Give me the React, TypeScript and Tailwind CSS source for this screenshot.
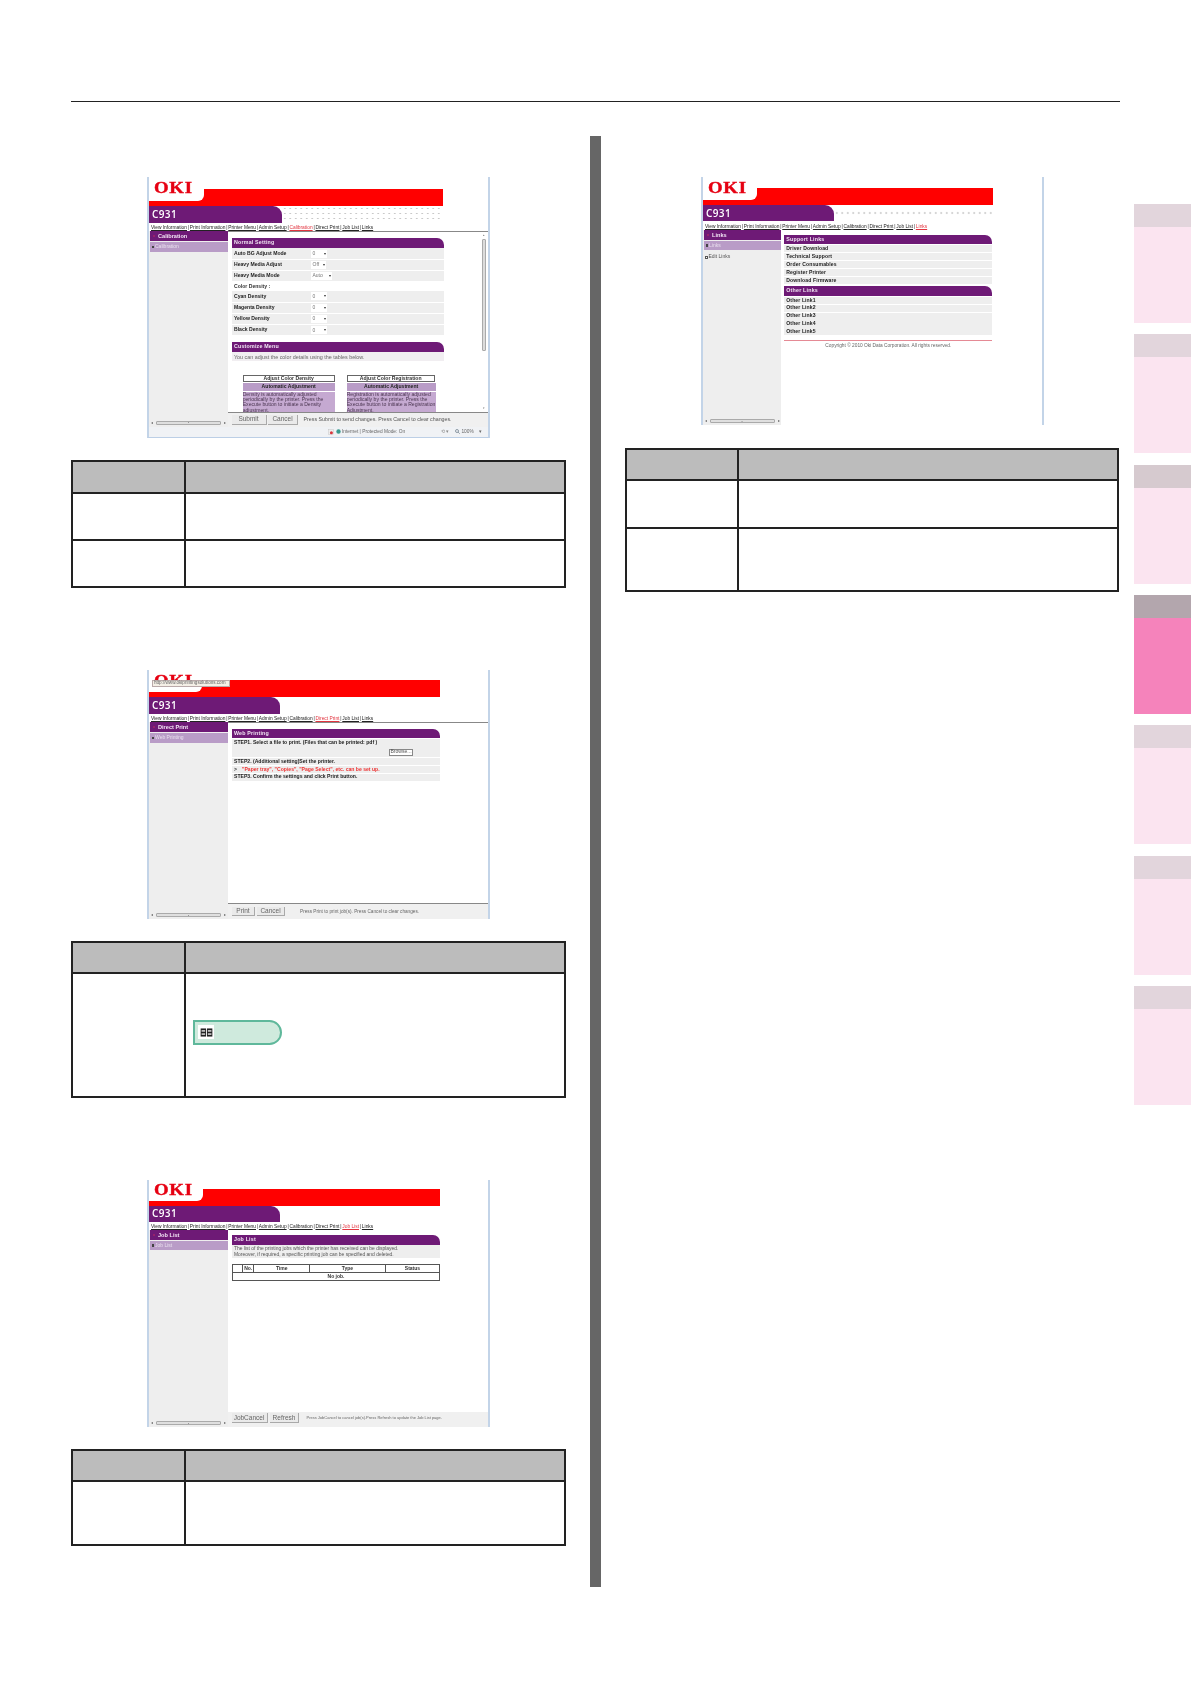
import React from 'react';

const sans = "font-['Liberation_Sans',Arial,sans-serif]";
const navItems = ['View Information', 'Print Information', 'Printer Menu', 'Admin Setup', 'Calibration', 'Direct Print', 'Job List', 'Links'];

function Header({ redTop, height, notch, redWidth, tabWidth, tabHeight, navHeight, active, dots, tooltip, logoTop = 'pt-[4px]' }: {
    redTop: string; height: string; notch: string; redWidth: string; tabWidth: string; tabHeight: string; navHeight: string;
    active: string; dots?: string; tooltip?: boolean; logoTop?: string;
}) {
    return (
        <div className="relative shrink-0">
            <div className={`flex flex-col ${redWidth}`}>
                <div className={`flex ${height} ${redTop}`}>
                    <div className={`${notch} h-[82%] bg-white rounded-br-[6px] ${logoTop} pl-[5px]`}>
                        <div className="origin-left scale-x-[1.14] font-['Liberation_Serif',serif] text-[16.5px] leading-[14px] font-bold tracking-[0.6px] text-[#e60012] [-webkit-text-stroke:0.4px_#e60012]">OKI</div>
                    </div>
                </div>
                <div className="flex">
                    <div className={`${tabWidth} ${tabHeight} bg-[#6e1a76] rounded-tr-[9px] flex items-center pl-[3px] font-['Open_Sans',sans-serif] text-[10px] font-semibold text-white tracking-[0.4px]`}>C931</div>
                    {dots && <div className={`flex-1 ${dots}`} />}
                </div>
            </div>
            <div className={`${navHeight} flex items-end pl-[2px] ${sans} text-[4.85px] leading-[6px] font-medium text-[#222] whitespace-nowrap`}>
                {navItems.map((item, i) => (
                    <span key={item}>
                        {i > 0 && <span className="px-[0.8px]">|</span>}
                        <span className={`underline ${item === active ? 'text-[#e2343f]' : ''}`}>{item}</span>
                    </span>
                ))}
            </div>
            {tooltip && (
                <div className={`absolute left-[3px] top-[10px] w-[78px] h-[7px] bg-[#f4efe6] border border-[#b9a9a9] flex items-center pl-[1px] ${sans} text-[4.6px] text-[#666] whitespace-nowrap`}>
                    http://www.okiprintingsolutions.com
                </div>
            )}
        </div>
    );
}

function Sidebar({ title, item, extra, width, headH, subH }: { title: string; item: string; extra?: string; width: string; headH: string; subH: string }) {
    return (
        <div className={`${width} shrink-0 bg-[#eeeeee] flex flex-col ${sans}`}>
            <div className={`${headH} bg-[#6e1a76] ml-[1px] flex items-center pl-[3px] gap-[3px] text-[5.6px] font-bold text-[#f3e6f5]`}>
                <span className="w-[2px] h-[2px] rounded-full bg-[#a4246a]" />
                {title}
            </div>
            <div className={`${subH} bg-[#b99cc7] ml-[1px] mt-[1px] flex items-center pl-[1.5px] gap-[1px] text-[5px] text-[#e9dfee]`}>
                <span className="w-[2.5px] h-[2.5px] bg-white border-[0.5px] border-[#444]" />
                {item}
            </div>
            {extra && (
                <div className="mt-[3px] ml-[2px] flex items-center gap-[0.5px] text-[5px] text-[#555]">
                    <span className="w-[3px] h-[3px] bg-white border-[0.5px] border-[#555]" />
                    {extra}
                </div>
            )}
            <div className="mt-auto mb-[1px] flex items-center justify-center gap-[3px] h-[6px] text-[4px] text-[#666]">
                <span>◂</span>
                <div className="w-[65px] h-[4px] rounded-[1px] border-[0.5px] border-[#aaa] bg-[#dfdfdf] flex items-center justify-center text-[3px]">▪</div>
                <span>▸</span>
            </div>
        </div>
    );
}

function Section({ title, h = 'h-[10px]' }: { title: string; h?: string }) {
    return <div className={`${h} bg-[#6e1a76] rounded-tr-[7px] flex items-center pl-[2px] ${sans} text-[5.3px] font-bold text-[#f1e6f3] tracking-[0.2px]`}>{title}</div>;
}

function Select({ value, w = 'w-[16px]' }: { value: string; w?: string }) {
    return (
        <div className={`${w} h-[8px] bg-white flex items-center justify-between px-[1.5px] text-[5px] font-normal text-[#777]`}>
            <span>{value}</span>
            <span className="text-[4px] text-[#333]">▾</span>
        </div>
    );
}

function Setting({ label, value, w }: { label: string; value: string; w?: string }) {
    return (
        <div className="h-[10.3px] mb-[1px] bg-[#eeeeee] flex items-center pl-[2px] font-bold text-[#222]">
            <span className="w-[77px]">{label}</span>
            <Select value={value} w={w} />
        </div>
    );
}

function Button({ label, w, h = 'h-[10px]', size = 'text-[6.5px]' }: { label: string; w: string; h?: string; size?: string }) {
    return <div className={`${w} ${h} ${size} shrink-0 bg-[#eaeaea] border-r border-b border-[#a9a9a9] flex items-center justify-center text-[#666]`}>{label}</div>;
}

function Frame({ height, children, border = '' }: { height: string; children: React.ReactNode; border?: string }) {
    return (
        <div className={`ml-[76px] w-[343px] ${height} bg-white border-l-2 border-r-2 border-[#c3d4e8] flex flex-col overflow-hidden blur-[0.5px] ${border}`}>
            {children}
        </div>
    );
}

function CalibrationShot() {
    const adjust = (head: string, body: string, boxW: string, w: string) => (
        <div className={`${w} flex flex-col text-center`}>
            <div className={`${boxW} h-[6.8px] border-[0.7px] border-[#666] bg-white flex items-center justify-center leading-none font-bold text-[#333]`}>{head}</div>
            <div className="mt-[1.5px] h-[8px] bg-[#b99cc7] flex items-center justify-center font-bold text-[#222]">Automatic Adjustment</div>
            <div className="mt-[0.5px] bg-[#c5a9d1] text-left leading-[5.3px] text-[#4a3550] h-[30px] text-[5.1px]">{body}</div>
        </div>
    );
    return (
        <Frame height="h-[260.5px]" border="border-b border-b-[#bccfe6]">
            <Header redTop="bg-[linear-gradient(to_bottom,#fff_12px,#f00_12px)]" height="h-[29px]" notch="w-[55px]" redWidth="w-[294px]" tabWidth="w-[133px]" tabHeight="h-[16.5px]" navHeight="h-[8.5px]" active="Calibration"
                dots="bg-[radial-gradient(#c9c9c9_0.5px,transparent_0.7px)] bg-[length:5.5px_5px]" />
            <div className="flex flex-1 min-h-0">
                <Sidebar title="Calibration" item="Calibration" width="w-[79px]" headH="h-[10px]" subH="h-[10px]" />
                <div className="flex-1 flex flex-col min-w-0 border-t border-[#888]">
                    <div className="flex-1 min-h-0 flex overflow-hidden">
                        <div className={`w-[212px] ml-[4px] pt-[5.7px] ${sans} text-[5.1px] overflow-hidden`}>
                            <Section title="Normal Setting" />
                            <div className="mt-[0.7px]">
                                <Setting label="Auto BG Adjust Mode" value="0" />
                                <Setting label="Heavy Media Adjust" value="Off" w="w-[15px]" />
                                <Setting label="Heavy Media Mode" value="Auto" w="w-[21px]" />
                                <div className="h-[8.5px] mb-[0.5px] flex items-center pl-[2px] font-bold text-[#333]">Color Density :</div>
                                <Setting label="Cyan Density" value="0" />
                                <Setting label="Magenta Density" value="0" />
                                <Setting label="Yellow Density" value="0" />
                                <Setting label="Black Density" value="0" />
                            </div>
                            <div className="mt-[7px]"><Section title="Customize Menu" /></div>
                            <div className="h-[8.5px] bg-[#f1eef1] flex items-center pl-[2px] text-[#666] text-[5.4px]">You can adjust the color details using the tables below.</div>
                            <div className="mt-[14px] ml-[10.7px] flex gap-[12px]">
                                {adjust('Adjust Color Density', 'Density is automatically adjusted periodically by the printer. Press the Execute button to initiate a Density adjustment.', 'w-[92px]', 'w-[92px]')}
                                {adjust('Adjust Color Registration', 'Registration is automatically adjusted periodically by the printer. Press the Execute button to initiate a Registration Adjustment.', 'w-[88px]', 'w-[89px]')}
                            </div>
                        </div>
                        <div className="ml-auto mr-[1.5px] w-[5px] flex flex-col items-center text-[3px] text-[#777]">
                            <span className="h-[7px] leading-[7px]">▴</span>
                            <div className="w-[4.5px] h-[112px] rounded-[1px] bg-[#dcdcdc] border-[0.5px] border-[#aaa]" />
                            <span className="mt-auto h-[6px]">▾</span>
                        </div>
                    </div>
                    <div className={`h-[15px] shrink-0 border-t border-[#888] bg-[#f0f0f0] flex items-center pl-[3.5px] gap-[1.5px] ${sans}`}>
                        <Button label="Submit" w="w-[35px]" />
                        <Button label="Cancel" w="w-[30px]" />
                        <span className="ml-[4px] text-[5.3px] text-[#555] whitespace-nowrap">Press Submit to send changes. Press Cancel to clear changes.</span>
                    </div>
                </div>
            </div>
            <div className={`h-[10px] shrink-0 bg-[#f0f2f5] flex items-center pl-[179px] ${sans} text-[4.8px] text-[#666]`}>
                <svg viewBox="0 0 8 8" className="w-[6px] h-[6px]"><rect x="0.5" y="0.5" width="7" height="7" fill="#eee" stroke="#bbb" strokeWidth="0.5" /><circle cx="4.5" cy="5" r="2" fill="#d9363e" /></svg>
                <svg viewBox="0 0 8 8" className="w-[5px] h-[5px] ml-[2px]"><circle cx="4" cy="4" r="3.5" fill="#3a9a8f" /></svg>
                <span className="ml-[1px]">Internet | Protected Mode: On</span>
                <span className="ml-[36px] text-[#888]">⟲ ▾</span>
                <svg viewBox="0 0 8 8" className="w-[5px] h-[5px] ml-[6px] mr-[1px]"><circle cx="3.2" cy="3.2" r="2.4" fill="none" stroke="#567" strokeWidth="1" /><path d="M5 5 L7.5 7.5" stroke="#567" strokeWidth="1" /></svg>
                <span>100%</span>
                <span className="ml-[5px]">▾</span>
            </div>
        </Frame>
    );
}

function Step({ children, h = 'h-[7.2px]', cls = 'font-bold text-[#222]' }: { children: React.ReactNode; h?: string; cls?: string }) {
    return <div className={`${h} mb-[0.8px] bg-[#eeeeee] flex items-center pl-[2px] ${cls}`}>{children}</div>;
}

function DirectPrintShot() {
    return (
        <Frame height="h-[249px]">
            <Header redTop="bg-[linear-gradient(to_bottom,#fff_10.3px,#f00_10.3px)]" height="h-[27.3px]" notch="w-[53px]" redWidth="w-[291px]" tabWidth="w-[131px]" tabHeight="h-[16.7px]" navHeight="h-[8.3px]" active="Direct Print" tooltip />
            <div className="flex flex-1 min-h-0">
                <Sidebar title="Direct Print" item="Web Printing" width="w-[79px]" headH="h-[9.7px]" subH="h-[9.7px]" />
                <div className="flex-1 flex flex-col min-w-0 border-t border-[#888]">
                    <div className={`flex-1 min-h-0 pl-[4px] pt-[5.7px] ${sans} text-[5.1px]`}>
                        <div className="w-[208px]">
                            <Section title="Web Printing" h="h-[9.5px]" />
                            <div className="mt-[1px]">
                                <Step>STEP1. Select a file to print. (Files that can be printed: pdf )</Step>
                                <Step h="h-[9.5px]"><span className="ml-[155px] w-[24px] h-[7px] bg-white border-[0.5px] border-[#888] flex items-center justify-center font-normal text-[#555]">Browse...</span></Step>
                                <Step>STEP2. (Additional setting)Set the printer.</Step>
                                <Step cls="font-bold text-[#e33]"><span className="text-[#333] mr-[5px]">&gt;</span>"Paper tray", "Copies", "Page Select", etc. can be set up.</Step>
                                <Step>STEP3. Confirm the settings and click Print button.</Step>
                            </div>
                        </div>
                    </div>
                    <div className={`h-[15.7px] shrink-0 border-t border-[#888] bg-[#f0f0f0] flex items-center pl-[4px] gap-[2px] ${sans}`}>
                        <Button label="Print" w="w-[23px]" h="h-[9px]" />
                        <Button label="Cancel" w="w-[28px]" h="h-[9px]" />
                        <span className="ml-[13px] text-[4.7px] text-[#666] whitespace-nowrap">Press Print to print job(s). Press Cancel to clear changes.</span>
                    </div>
                </div>
            </div>
        </Frame>
    );
}

function JobListShot() {
    const cols = ['w-[10px]', 'w-[11.4px]', 'w-[55.6px]', 'w-[76px]', 'flex-1'];
    const heads = ['', 'No.', 'Time', 'Type', 'Status'];
    return (
        <Frame height="h-[247px]">
            <Header redTop="bg-[linear-gradient(to_bottom,#fff_9px,#f00_9px)]" height="h-[26px]" notch="w-[54px]" redWidth="w-[291px]" tabWidth="w-[131px]" tabHeight="h-[16px]" navHeight="h-[8px]" active="Job List" logoTop="pt-[3px]" />
            <div className="flex flex-1 min-h-0">
                <Sidebar title="Job List" item="Job List" width="w-[79px]" headH="h-[10px]" subH="h-[9.5px]" />
                <div className="flex-1 flex flex-col min-w-0">
                    <div className={`flex-1 min-h-0 pl-[4px] pt-[5.3px] ${sans}`}>
                        <div className="w-[208px]">
                            <Section title="Job List" />
                            <div className="h-[13px] bg-[#eeeeee] pl-[2px] flex flex-col justify-center text-[4.95px] leading-[5.4px] text-[#555] whitespace-nowrap">
                                <span>The list of the printing jobs which the printer has received can be displayed.</span>
                                <span>Moreover, if required, a specific printing job can be specified and deleted.</span>
                            </div>
                            <div className="mt-[6px] border-[0.7px] border-[#555] text-[5px] font-bold text-[#333]">
                                <div className="h-[7.5px] flex border-b-[0.7px] border-[#555]">
                                    {heads.map((head, i) => (
                                        <div key={i} className={`${cols[i]} ${i < 4 ? 'border-r-[0.7px] border-[#555]' : ''} flex items-center justify-center`}>{head}</div>
                                    ))}
                                </div>
                                <div className="h-[7.5px] flex items-center justify-center">No job.</div>
                            </div>
                        </div>
                    </div>
                    <div className={`h-[15px] shrink-0 bg-[#f0f0f0] flex items-start pt-[1px] pl-[3.5px] gap-[2.5px] ${sans}`}>
                        <Button label="JobCancel" w="w-[36px]" />
                        <Button label="Refresh" w="w-[29px]" />
                        <span className="ml-[5px] mt-[2.5px] text-[4px] text-[#666] whitespace-nowrap">Press JobCancel to cancel job(s).Press Refresh to update the Job List page.</span>
                    </div>
                </div>
            </div>
        </Frame>
    );
}

function LinkRow({ label }: { label: string }) {
    return <div className="h-[7.2px] mb-[0.7px] bg-[#eeeeee] flex items-center pl-[2px] font-bold text-[#222] tracking-[0.1px]">{label}</div>;
}

function LinksShot() {
    return (
        <Frame height="h-[248px]">
            <Header redTop="bg-[linear-gradient(to_bottom,#fff_11.3px,#f00_11.3px)]" height="h-[28px]" notch="w-[54px]" redWidth="w-[290px]" tabWidth="w-[131px]" tabHeight="h-[16.3px]" navHeight="h-[8.7px]" active="Links"
                dots="bg-[radial-gradient(#d6d6d6_0.5px,transparent_0.7px)] bg-[length:5.5px_16px]" />
            <div className="flex flex-1 min-h-0">
                <Sidebar title="Links" item="Links" extra="Edit Links" width="w-[78px]" headH="h-[10px]" subH="h-[9.5px]" />
                <div className={`flex-1 min-w-0 pl-[3.3px] pt-[5px] ${sans} text-[5.1px]`}>
                    <div className="w-[208px]">
                        <Section title="Support Links" h="h-[9.3px]" />
                        <div className="mt-[1px]">
                            {['Driver Download', 'Technical Support', 'Order Consumables', 'Register Printer', 'Download Firmware'].map((l) => <LinkRow key={l} label={l} />)}
                        </div>
                        <div className="mt-[2.5px]"><Section title="Other Links" h="h-[9.3px]" /></div>
                        <div className="mt-[1px]">
                            {['Other Link1', 'Other Link2', 'Other Link3', 'Other Link4', 'Other Link5'].map((l) => <LinkRow key={l} label={l} />)}
                        </div>
                        <div className="mt-[5px] border-t border-[#e58a95] pt-[0.5px] text-center text-[4.8px] text-[#666]">Copyright © 2010 Oki Data Corporation. All rights reserved.</div>
                    </div>
                </div>
            </div>
        </Frame>
    );
}

function NoteIcon() {
    return (
        <svg viewBox="0 0 14 10" className="w-[13px] h-[9px]">
            <rect x="0.5" y="0.5" width="6" height="9" fill="#222" />
            <rect x="7.5" y="0.5" width="6" height="9" fill="#222" />
            <rect x="1.5" y="2.5" width="4" height="1.5" fill="#eee" />
            <rect x="8.5" y="2.5" width="4" height="1.5" fill="#eee" />
            <rect x="1.5" y="6" width="4" height="1.5" fill="#eee" />
            <rect x="8.5" y="6" width="4" height="1.5" fill="#eee" />
        </svg>
    );
}

function InfoTable({ rows, first = 'w-[113px]', children, mt }: { rows: string[]; first?: string; children?: React.ReactNode; mt: string }) {
    return (
        <div className={`${mt} border-2 border-[#222] flex flex-col bg-white`}>
            {rows.map((h, i) => (
                <div key={i} className={`${h} flex ${i > 0 ? 'border-t-2 border-[#222]' : 'bg-[#bcbcbc]'}`}>
                    <div className={`${first} shrink-0 border-r-2 border-[#222]`} />
                    <div className="flex-1">{i === rows.length - 1 ? children : null}</div>
                </div>
            ))}
        </div>
    );
}

const tabs = [
    ['bg-[#e2d5dc]', 'bg-[#fbe4f0]'],
    ['bg-[#e2d5dc]', 'bg-[#fbe4f0]'],
    ['bg-[#d6cacf]', 'bg-[#fbe4f0]'],
    ['bg-[#b3a6ad]', 'bg-[#f583bb]'],
    ['bg-[#e2d5dc]', 'bg-[#fbe4f0]'],
    ['bg-[#e2d5dc]', 'bg-[#fbe4f0]'],
    ['bg-[#e2d5dc]', 'bg-[#fbe4f0]'],
];

export default function App() {
    return (
        <div className="flex w-[1191px] h-[1684px] bg-white overflow-hidden">
            <div className="w-[1134px] shrink-0 pt-[101px]">
                <div className="ml-[71px] w-[1049px] h-[1.25px] bg-[#222]" />
                <div className="flex ml-[71px]">
                    <div className="w-[495px] pt-[74.75px] flex flex-col">
                        <CalibrationShot />
                        <InfoTable mt="mt-[22.5px]" rows={['h-[30px]', 'h-[47px]', 'h-[47.3px]']} />
                        <div className="mt-[81.7px]"><DirectPrintShot /></div>
                        <InfoTable mt="mt-[22.3px]" rows={['h-[28.7px]', 'h-[124.3px]']}>
                            <div className="pl-[7px] pt-[46px]">
                                <div className="w-[89px] h-[25px] border-2 border-[#5fb89b] rounded-l-[5px] rounded-r-full bg-[#cfeadd] flex items-center pl-[3px]">
                                    <div className="w-[16px] h-[14px] bg-white flex items-center justify-center"><NoteIcon /></div>
                                </div>
                            </div>
                        </InfoTable>
                        <div className="mt-[81.7px]"><JobListShot /></div>
                        <InfoTable mt="mt-[22.3px]" rows={['h-[29px]', 'h-[63.7px]']} />
                    </div>
                    <div className="ml-[24px] mt-[33.75px] w-[11px] h-[1451px] shrink-0 bg-[#666666]" />
                    <div className="ml-[24px] w-[494px] pt-[74.75px] flex flex-col">
                        <LinksShot />
                        <InfoTable mt="mt-[23.3px]" first="w-[112px]" rows={['h-[28.3px]', 'h-[48px]', 'h-[63.7px]']} />
                    </div>
                </div>
            </div>
            <div className="flex-1 pt-[204px] flex flex-col gap-[11.33px]">
                {tabs.map(([head, body], i) => (
                    <div key={i} className="flex flex-col">
                        <div className={`h-[23px] ${head}`} />
                        <div className={`h-[96px] ${body}`} />
                    </div>
                ))}
            </div>
        </div>
    );
}
